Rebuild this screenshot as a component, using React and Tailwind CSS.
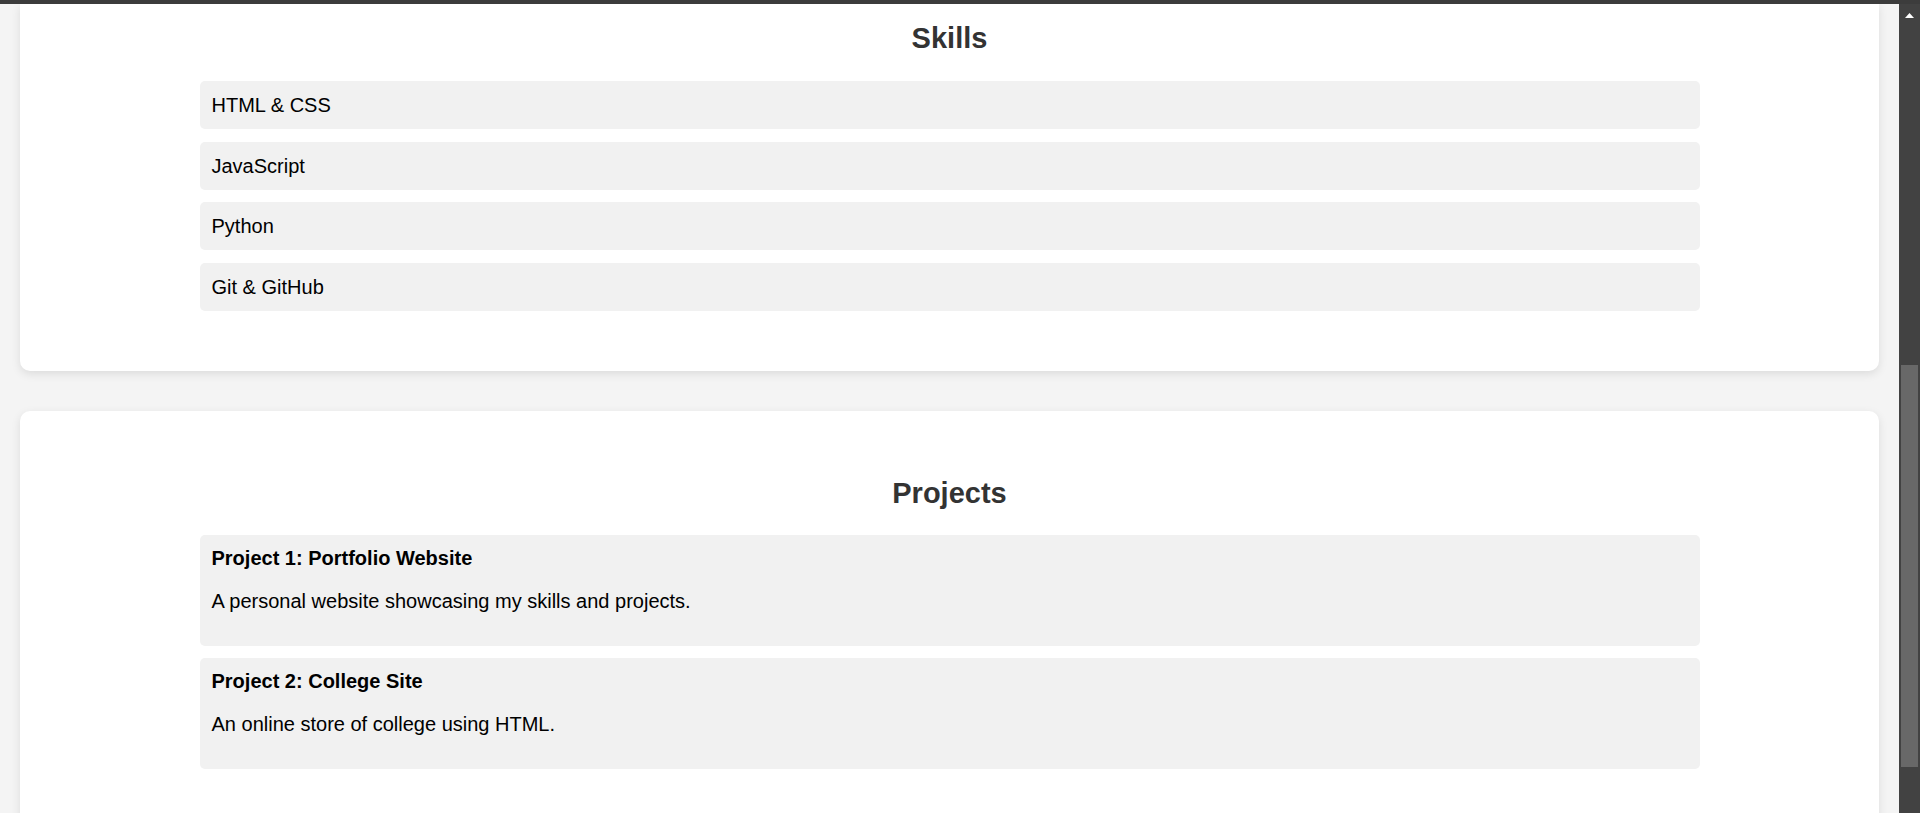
export default function App() {
  const skills = ["HTML & CSS", "JavaScript", "Python", "Git & GitHub"];
  const projects = [
    { title: "Project 1: Portfolio Website", desc: "A personal website showcasing my skills and projects." },
    { title: "Project 2: College Site", desc: "An online store of college using HTML." },
  ];
  return (
    <div
      className="h-[813px] w-[1920px] overflow-hidden flex flex-col bg-[#f4f4f4]"
      style={{ fontFamily: '"Liberation Sans", Arial, sans-serif' }}
    >
      <div className="h-[4px] w-full bg-[#3c3c3c] shrink-0" />
      <div className="flex flex-1 min-h-0">
        <main className="flex-1 min-w-0 px-[20px] overflow-hidden">
          <section className="bg-white rounded-b-[10px] shadow-[0_3px_10px_rgba(0,0,0,0.1)] pt-[18px] pb-[60px]">
            <h2 className="text-center text-[29px] leading-[33px] font-bold text-[#333] mb-[26px]">Skills</h2>
            <ul className="max-w-[1500px] mx-auto flex flex-col gap-[12.7px]">
              {skills.map((s) => (
                <li key={s} className="bg-[#f1f1f1] rounded-[5px] px-[12px] py-[12px] text-[20px] leading-[24px] text-black">
                  {s}
                </li>
              ))}
            </ul>
          </section>
          <section className="mt-[40px] bg-white rounded-[10px] shadow-[0_3px_10px_rgba(0,0,0,0.1)] pt-[66px] pb-[60px]">
            <h2 className="text-center text-[29px] leading-[33px] font-bold text-[#333] mb-[25px]">Projects</h2>
            <div className="max-w-[1500px] mx-auto flex flex-col gap-[12px]">
              {projects.map((p) => (
                <div key={p.title} className="bg-[#f1f1f1] rounded-[5px] px-[12px] pt-[11px] pb-[12px] text-black">
                  <h3 className="text-[20px] leading-[24px] font-bold">{p.title}</h3>
                  <p className="text-[20px] leading-[24px] mt-[19px] mb-[21px]">{p.desc}</p>
                </div>
              ))}
            </div>
          </section>
        </main>
        <div className="w-[21px] shrink-0 bg-[#424242] flex flex-col items-center">
          <svg width="9" height="5" viewBox="0 0 9 5" className="mt-[9px]">
            <polygon points="4.5,0 9,5 0,5" fill="#ffffff" />
          </svg>
          <div className="mt-[347px] w-[17px] h-[402px] bg-[#686868]" />
        </div>
      </div>
    </div>
  );
}
